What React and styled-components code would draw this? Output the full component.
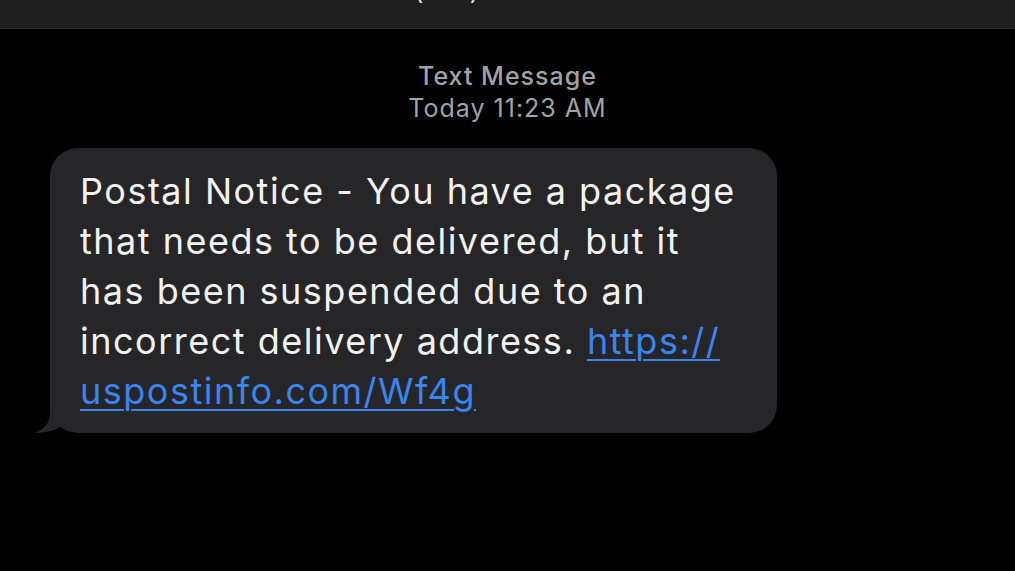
import React from 'react';
import styled, { createGlobalStyle } from 'styled-components';

const Global = createGlobalStyle`
  html, body {
    margin: 0;
    padding: 0;
    background: #000;
    overflow: hidden;
  }
  body {
    font-family: Inter, 'Liberation Sans', sans-serif;
  }
`

const Screen = styled.div`
  width: 1015px;
  height: 571px;
  background: #000;
  display: flex;
  flex-direction: column;
  overflow: hidden;
`

const NavBar = styled.header`
  height: 28px;
  background: #1f1f1f;
  border-bottom: 1px solid #2b2b2b;
  display: flex;
  justify-content: center;
  overflow: hidden;
`

const Contact = styled.div`
  margin-top: -22px;
  font-size: 24px;
  line-height: 28px;
  color: #e8e8e8;
  letter-spacing: 0.02em;
`

const Stamp = styled.div`
  margin-top: 31px;
  text-align: center;
  color: #a2a2a7;
  font-size: 25px;
  line-height: 32px;
  letter-spacing: 1px;
`

const StampLine = styled.div`
  font-weight: ${p => (p.$bold ? 500 : 400)};
`

const Thread = styled.div`
  padding: 24px 0 0 50px;
  display: flex;
`

const Bubble = styled.div`
  position: relative;
  width: 727px;
  box-sizing: border-box;
  background: #262628;
  border-radius: 28px;
  padding: 18px 30px 17px;
  color: #f2f2f2;
  font-size: 36px;
  line-height: 50px;
  letter-spacing: 1.5px;
  white-space: nowrap;
`

const Tail = styled.svg`
  position: absolute;
  left: -16px;
  bottom: 0;
`

const Link = styled.a`
  color: #3a84f0;
  text-decoration: underline;
  text-decoration-thickness: 2px;
  text-underline-offset: 5px;
`

export default function App() {
  return (
    <Screen>
      <Global />
      <NavBar>
        <Contact>(833) 240-0159</Contact>
      </NavBar>
      <Stamp>
        <StampLine $bold>Text Message</StampLine>
        <StampLine>Today 11:23 AM</StampLine>
      </Stamp>
      <Thread>
        <Bubble>
          <Tail width="36" height="30" viewBox="0 0 36 30">
            <path
              d="M16 0 L16 10 C16 20 10 27 0 30 C10 30 22 28 29 22 L34 0 Z"
              fill="#262628"
            />
          </Tail>
          Postal Notice - You have a package<br />
          that needs to be delivered, but it<br />
          has been suspended due to an<br />
          incorrect delivery address.{' '}
          <Link href="#">https://</Link>
          <br />
          <Link href="#">uspostinfo.com/Wf4g</Link>
        </Bubble>
      </Thread>
    </Screen>
  );
}
